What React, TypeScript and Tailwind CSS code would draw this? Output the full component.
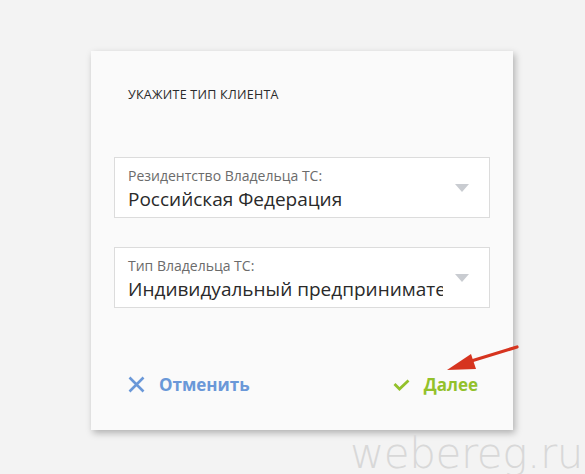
import { useState } from "react";

const FONT = { fontFamily: "'Open Sans', Lato, Arial, sans-serif" };

function Caret() {
  return (
    <svg width="14" height="8" viewBox="0 0 14 8" className="shrink-0">
      <path d="M0 0h14L7 8z" fill="#c9ccd1" />
    </svg>
  );
}

function SelectBox({ label, value }: { label: string; value: string }) {
  return (
    <div className="flex h-[61px] items-center border border-[#dcdcdc] bg-white pl-[13px] pr-[20px]">
      <div className="w-[315px] shrink-0 pt-[4px]">
        <div className="text-[14px] leading-[16px] text-[#6b6b6b]">{label}</div>
        <div className="mt-[2px] overflow-hidden whitespace-nowrap text-[19px] leading-[26px] text-[#2a2a2a]">
          {value}
        </div>
      </div>
      <div className="flex-1" />
      <Caret />
    </div>
  );
}

export default function App() {
  const [resident] = useState("Российская Федерация");
  const [owner] = useState("Индивидуальный предприниматель");

  return (
    <div className="relative h-[474px] w-[585px] overflow-hidden bg-[#f3f3f3]" style={FONT}>
      <div className="ml-[91px] mt-[51px] flex h-[379px] w-[422px] flex-col bg-[#fafafa] px-[23px] shadow-[2px_3px_7px_rgba(0,0,0,0.28)]">
        <h1 className="ml-[14px] mt-[35px] text-[12.5px] font-medium leading-[18px] tracking-[0.02em] text-[#2b2b2b]">
          УКАЖИТЕ ТИП КЛИЕНТА
        </h1>
        <div className="mt-[53px] flex flex-col gap-[29px]">
          <SelectBox label="Резидентство Владельца ТС:" value={resident} />
          <SelectBox label="Тип Владельца ТС:" value={owner} />
        </div>
        <div className="mt-[64px] flex items-center justify-between pl-[14px] pr-[12px]">
          <button className="flex items-center gap-[14px] text-[17px] font-bold text-[#6a98d8]">
            <svg width="17" height="17" viewBox="0 0 17 17" fill="none" stroke="#6a98d8" strokeWidth="2.6">
              <path d="M1.5 1.5l14 14M15.5 1.5l-14 14" />
            </svg>
            Отменить
          </button>
          <button className="flex items-center gap-[14px] text-[17px] font-bold text-[#93c12a]">
            <svg width="17" height="12" viewBox="0 0 17 12" fill="none" stroke="#93c12a" strokeWidth="2.8">
              <path d="M1.5 5l5 5 9-8.5" />
            </svg>
            Далее
          </button>
        </div>
      </div>

      {/* annotation arrow */}
      <svg className="absolute left-0 top-0" width="585" height="474" viewBox="0 0 585 474">
        <path d="M517 347L468 362" stroke="#d6341f" strokeWidth="3.2" strokeLinecap="round" />
        <path d="M447 370L471 354L476 369z" fill="#d6341f" />
      </svg>

      <div className="absolute right-[2px] top-[433px] text-[42px] leading-[42px] tracking-[-0.01em] text-[#d8d8d8]" style={{ fontFamily: "'DejaVu Sans', sans-serif", fontWeight: 200 }}>
        webereg.ru
      </div>
    </div>
  );
}
